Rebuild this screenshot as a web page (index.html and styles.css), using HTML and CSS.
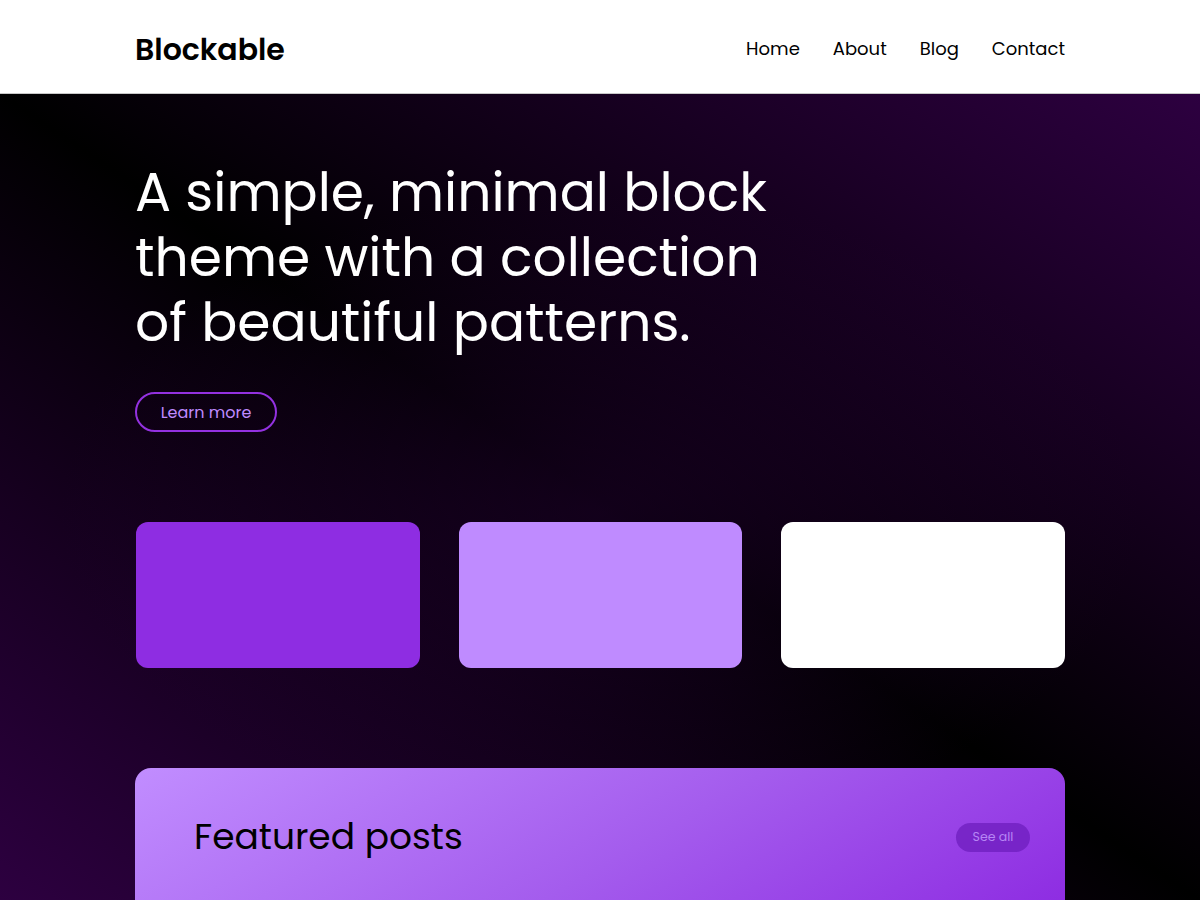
FILE: index.html
```html
<!DOCTYPE html>
<html lang="en">
<head>
<meta charset="utf-8">
<title>Blockable</title>
<link rel="stylesheet" href="styles.css">
</head>
<body>
<header class="site-header">
  <div class="header-inner">
    <a class="logo" href="#">Blockable</a>
    <nav class="nav">
      <a href="#">Home</a>
      <a href="#">About</a>
      <a href="#">Blog</a>
      <a href="#">Contact</a>
    </nav>
  </div>
</header>
<main class="hero">
  <div class="container">
    <h1 class="hero-title">A simple, minimal block theme with a collection of beautiful patterns.</h1>
    <a class="btn-outline" href="#">Learn more</a>
    <div class="swatches">
      <div class="swatch swatch-primary"></div>
      <div class="swatch swatch-light"></div>
      <div class="swatch swatch-white"></div>
    </div>
    <section class="featured">
      <h2 class="featured-title">Featured posts</h2>
      <a class="btn-pill" href="#">See all</a>
    </section>
  </div>
</main>
</body>
</html>
```
FILE: styles.css
```css
* { box-sizing: border-box; }
html, body { margin: 0; padding: 0; }
body {
  font-family: "Poppins", "Inter", "Noto Sans", sans-serif;
  color: #000;
  background: #000;
  overflow: hidden;
}
a { text-decoration: none; color: inherit; }

.site-header {
  background: #fff;
  height: 94px;
  border-bottom: 1px solid #c8c8c8;
}
.header-inner {
  width: 930px;
  margin: 0 auto;
  height: 93px;
  display: flex;
  align-items: center;
  justify-content: space-between;
  padding-top: 7px;
}
.logo {
  font-size: 30px;
  font-weight: 600;
  color: #000;
}
.nav {
  display: flex;
  gap: 33px;
  font-size: 18px;
  color: #000;
  padding-bottom: 3px;
}

.hero {
  height: 806px;
  background:
    radial-gradient(ellipse 45% 40% at 50% 52%, rgba(40, 0, 58, 0.45), rgba(40, 0, 58, 0) 100%),
    linear-gradient(to top right, #2d0040 0%, #000 50%, #2d0040 100%);
  overflow: hidden;
}
.container {
  width: 930px;
  margin: 0 auto;
  padding-top: 66px;
}
.hero-title {
  margin: 0;
  width: 680px;
  color: #fff;
  font-size: 53.5px;
  font-weight: 400;
  line-height: 65px;
}
.btn-outline {
  display: inline-flex;
  align-items: center;
  justify-content: center;
  margin-top: 37px;
  width: 142px;
  height: 40px;
  border: 2px solid #9331e0;
  border-radius: 20px;
  color: #bf8bff;
  font-size: 16px;
}
.swatches {
  margin-top: 90px;
  padding-left: 1px;
  display: grid;
  grid-template-columns: repeat(3, 1fr);
  gap: 39px;
}
.swatch {
  height: 146px;
  border-radius: 12px;
}
.swatch-primary { background: #8e2de2; }
.swatch-light { background: #bf8bff; }
.swatch-white { background: #fff; }

.featured {
  margin-top: 100px;
  height: 132px;
  border-radius: 16px 16px 0 0;
  background: linear-gradient(150deg, #c18dff 0%, #a45ced 55%, #8e2de2 100%);
  display: flex;
  align-items: center;
  justify-content: space-between;
  padding: 4px 35px 0 59px;
}
.featured-title {
  margin: 0;
  font-size: 36px;
  font-weight: 400;
  color: #000;
}
.btn-pill {
  display: inline-flex;
  align-items: center;
  justify-content: center;
  width: 74px;
  height: 29px;
  margin-top: 2px;
  border-radius: 15px;
  background: rgba(110, 30, 190, 0.75);
  color: #b785f5;
  font-size: 12.5px;
}
```
